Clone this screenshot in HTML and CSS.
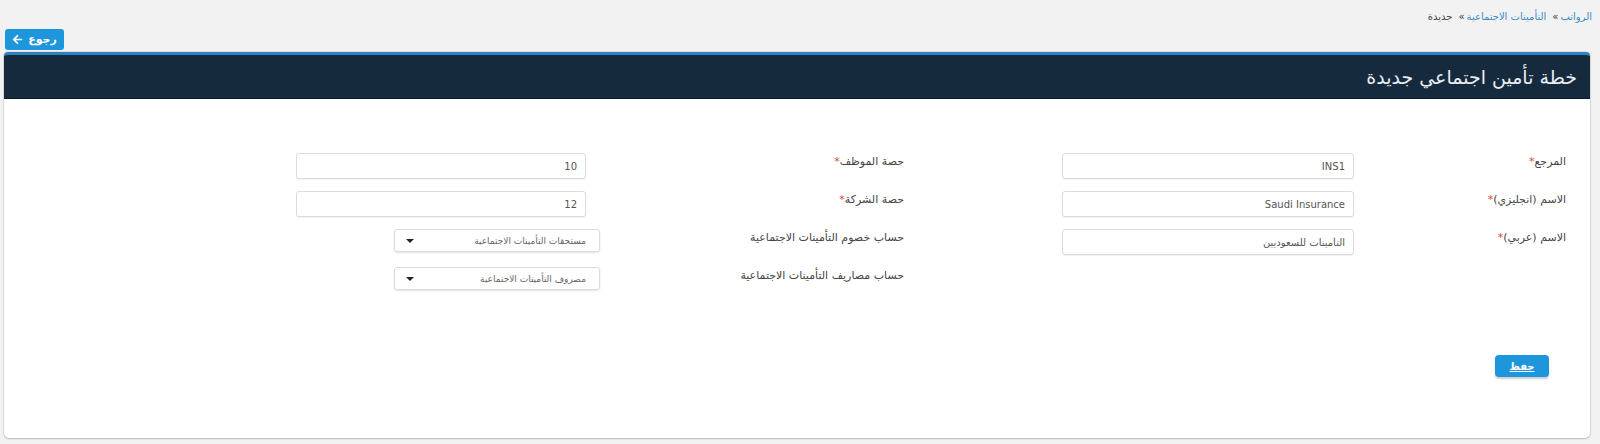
FILE: index.html
```html
<!DOCTYPE html>
<html lang="ar" dir="rtl">
<head>
<meta charset="utf-8">
<title>خطة تأمين اجتماعي جديدة</title>
<link rel="stylesheet" href="styles.css">
</head>
<body>
<nav class="breadcrumb">
  <a href="#" class="crumb-link">الرواتب</a><span class="sep">»</span>
  <a href="#" class="crumb-link">التأمينات الاجتماعية</a><span class="sep">»</span>
  <span class="crumb-current">جديدة</span>
</nav>
<div class="toolbar">
  <a href="#" class="btn btn-back">رجوع
    <svg class="arrow" viewBox="0 0 448 512" width="11" height="11"><path fill="#fff" d="M257.5 445.1l-22.2 22.2c-9.4 9.4-24.6 9.4-33.9 0L7 273c-9.4-9.4-9.4-24.6 0-33.9L201.4 44.7c9.4-9.4 24.6-9.4 33.900 0l22.2 22.2c9.5 9.5 9.3 25-.4 34.3L136.6 216H424c13.3 0 24 10.7 24 24v32c0 13.3-10.7 24-24 24H136.6l120.5 114.8c9.8 9.3 10 24.8.4 34.3z"/></svg>
  </a>
</div>
<section class="panel">
  <header class="panel-head"><h1 class="panel-title">خطة تأمين اجتماعي جديدة</h1></header>
  <div class="panel-body">
    <form class="form-grid">
      <label class="lbl">المرجع<span class="req">*</span></label>
      <div class="field"><input class="inp" type="text" value="INS1" dir="ltr"></div>
      <span class="gap"></span>
      <label class="lbl">حصة الموظف<span class="req">*</span></label>
      <div class="field"><input class="inp inp2" type="text" value="10" dir="ltr"></div>

      <label class="lbl">الاسم (انجليزي)<span class="req">*</span></label>
      <div class="field"><input class="inp" type="text" value="Saudi Insurance" dir="ltr"></div>
      <span class="gap"></span>
      <label class="lbl">حصة الشركة<span class="req">*</span></label>
      <div class="field"><input class="inp inp2" type="text" value="12" dir="ltr"></div>

      <label class="lbl">الاسم (عربي)<span class="req">*</span></label>
      <div class="field"><input class="inp" type="text" value="التأمينات للسعوديين"></div>
      <span class="gap"></span>
      <label class="lbl">حساب خصوم التأمينات الاجتماعية</label>
      <div class="field"><div class="sel"><span class="sel-text">مستحقات التأمينات الاجتماعية</span><span class="caret"></span></div></div>

      <span class="lbl"></span>
      <div class="field"></div>
      <span class="gap"></span>
      <label class="lbl">حساب مصاريف التأمينات الاجتماعية</label>
      <div class="field"><div class="sel"><span class="sel-text">مصروف التأمينات الاجتماعية</span><span class="caret"></span></div></div>
    </form>
    <div class="actions"><a href="#" class="btn btn-save">حفظ</a></div>
  </div>
</section>
</body>
</html>
```
FILE: styles.css
```css
html, body {
  margin: 0;
  padding: 0;
}
body {
  background: #f2f2f2;
  font-family: "DejaVu Sans", "Noto Sans", sans-serif;
  color: #444;
  direction: rtl;
  width: 1600px;
  height: 444px;
  overflow: hidden;
}
.breadcrumb {
  height: 29px;
  display: flex;
  align-items: center;
  padding-right: 8px;
  font-size: 10px;
  box-sizing: border-box;
  padding-top: 4px;
}
.crumb-link {
  color: #3a8ac4;
  text-decoration: none;
}
.sep {
  color: #333;
  margin: 0 2px 0 6px;
}
.crumb-current {
  color: #444;
}
.toolbar {
  display: flex;
  justify-content: flex-end;
  padding-left: 5px;
  height: 23px;
}
.btn {
  display: inline-flex;
  align-items: center;
  justify-content: center;
  text-decoration: none;
  color: #fff;
  background: #1e96dc;
  border-radius: 3px;
  font-size: 11px;
  box-sizing: border-box;
}
.btn-back {
  width: 59px;
  height: 21px;
  gap: 5px;
  font-weight: bold;
}
.arrow {
  display: block;
}
.panel {
  margin: 0 10px 0 4px;
  background: #fff;
  border-top: 3px solid #2b84bf;
  border-radius: 4px 4px 5px 5px;
  box-shadow: 0 1px 2px rgba(0,0,0,0.18), 0 0 0 1px #e2e2e2;
  height: 386px;
  box-sizing: border-box;
  overflow: hidden;
}
.panel-head {
  background: #162a3e;
  height: 44px;
  display: flex;
  align-items: center;
  padding-right: 13px;
  border-bottom: 1px solid #0e1c2a;
  box-sizing: border-box;
}
.panel-title {
  margin: 0;
  color: #e9edf1;
  font-size: 19px;
  font-weight: normal;
}
.panel-body {
  padding: 54px 24px 0 0;
}
.form-grid {
  display: grid;
  grid-template-columns: 212px 292px 158px 304px 304px;
  grid-auto-rows: 26px;
  row-gap: 12px;
}
.lbl {
  font-size: 11px;
  line-height: 18px;
  color: #454545;
  text-align: right;
  white-space: nowrap;
}
.req {
  color: #e2443a;
}
.field {
  display: flex;
  align-items: flex-start;
}
.inp {
  width: 100%;
  height: 26px;
  box-sizing: border-box;
  border: 1px solid #dcdcdc;
  border-radius: 3px;
  box-shadow: 0 1px 1px rgba(0,0,0,0.06);
  font-family: "DejaVu Sans", "Noto Sans", sans-serif;
  font-size: 10px;
  color: #555;
  text-align: right;
  padding: 0 8px;
  outline: none;
  background: #fff;
}
.inp2 {
  width: 290px;
  margin-right: 14px;
}
.sel {
  width: 206px;
  height: 23px;
  box-sizing: border-box;
  border: 1px solid #dcdcdc;
  border-radius: 3px;
  box-shadow: 0 1px 2px rgba(0,0,0,0.12);
  display: flex;
  align-items: center;
  justify-content: space-between;
  padding: 0 13px 0 11px;
  font-size: 9px;
  color: #666;
}
.caret {
  width: 0;
  height: 0;
  border-left: 4px solid transparent;
  border-right: 4px solid transparent;
  border-top: 4px solid #222;
}
.actions {
  display: flex;
  padding-right: 17px;
  margin-top: 62px;
}
.btn-save {
  width: 54px;
  height: 22px;
  border-radius: 4px;
  box-shadow: 0 2px 2px rgba(0,0,0,0.2);
  text-decoration: underline;
  font-weight: bold;
  font-size: 10px;
}
```
